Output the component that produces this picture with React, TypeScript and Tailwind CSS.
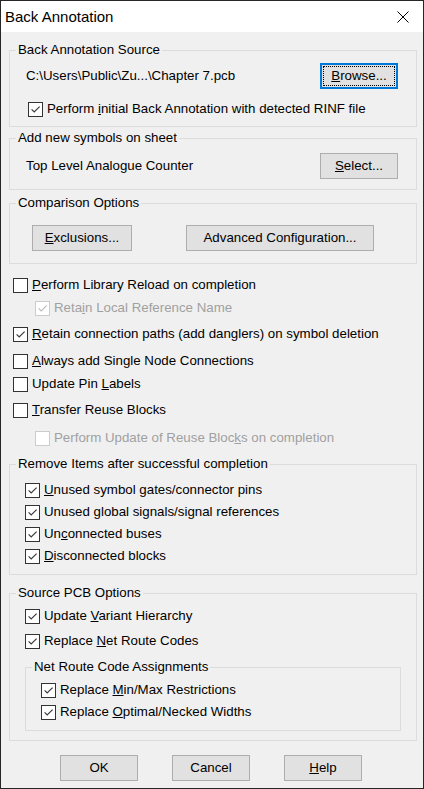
import type { ReactNode } from "react";
import clsx from "clsx";

function Box({ checked, disabled }: { checked?: boolean; disabled?: boolean }) {
    return (
        <span className={clsx("flex h-[15px] w-[15px] shrink-0 items-center justify-center border bg-white", disabled ? "border-[#cccccc]" : "border-[#333333]")}>
            {checked && (
                <svg width="13" height="13" viewBox="0 0 13 13">
                    <path d="M2.6 6.4 L5.2 9 L10.6 3.6" fill="none" stroke={disabled ? "#bdbdbd" : "#3c3c3c"} strokeWidth="1.2" />
                </svg>
            )}
        </span>
    )
}

function Option({ checked, disabled, className, children }: { checked?: boolean; disabled?: boolean; className?: string; children: ReactNode }) {
    return (
        <div className={clsx("flex h-4 items-center", className)}>
            <Box checked={checked} disabled={disabled} />
            <span className={clsx("ml-[4px] whitespace-nowrap", disabled && "text-[#a0a0a0]")}>{children}</span>
        </div>
    )
}

function Group({ title, className, children }: { title: string; className?: string; children: ReactNode }) {
    return (
        <fieldset className={clsx("border border-[#dcdcdc]", className)}>
            <legend className="ml-[6px] px-[2px] leading-4">{title}</legend>
            {children}
        </fieldset>
    )
}

function Button({ className, children }: { className?: string; children: ReactNode }) {
    return (
        <button className={clsx("flex h-[26px] items-center justify-center border border-[#adadad] bg-[#e1e1e1]", className)}>
            {children}
        </button>
    )
}

export default function App() {
    return (
        <div className="flex h-[789px] w-[424px] flex-col border border-[#262626] bg-[#f0f0f0] font-['Liberation_Sans',Arial,sans-serif] text-[13.3px] leading-4 text-black">
            <div className="flex h-[31px] shrink-0 items-center justify-between bg-white pl-[4px] pr-[14px]">
                <span className="text-[15px]">Back Annotation</span>
                <svg width="12" height="12" viewBox="0 0 12 12">
                    <path d="M0.5 0.5 L11.5 11.5 M11.5 0.5 L0.5 11.5" stroke="#000" strokeWidth="1" />
                </svg>
            </div>

            <div className="flex flex-1 flex-col">
                <Group title="Back Annotation Source" className="ml-[8px] mt-[10px] w-[408px] pb-[9px]">
                    <div className="mt-[5px] flex h-[26px] items-center justify-between pl-[16px] pr-[18px]">
                        <span>C:\Users\Public\Zu...\Chapter 7.pcb</span>
                        <button className="h-[26px] w-[78px] border-2 border-[#0078d7] bg-[#e1e1e1] p-[1px]">
                            <span className="flex h-full w-full items-center justify-center border border-dotted border-black">
                                <span><u>B</u>rowse...</span>
                            </span>
                        </button>
                    </div>
                    <Option checked className="ml-[18px] mt-[12px]">Perform <u>i</u>nitial Back Annotation with detected RINF file</Option>
                </Group>

                <Group title="Add new symbols on sheet" className="ml-[8px] mt-[3px] w-[408px] pb-[10px]">
                    <div className="mt-[7px] flex h-[26px] items-center justify-between pl-[16px] pr-[18px]">
                        <span>Top Level Analogue Counter</span>
                        <Button className="w-[78px]"><span><u>S</u>elect...</span></Button>
                    </div>
                </Group>

                <Group title="Comparison Options" className="ml-[8px] mt-[5px] w-[408px] pb-[12px]">
                    <div className="mt-[14px] flex">
                        <Button className="ml-[22px] w-[100px]"><span><u>E</u>xclusions...</span></Button>
                        <Button className="ml-[54px] w-[188px]"><span>Advanced Confi<u>g</u>uration...</span></Button>
                    </div>
                </Group>

                <div className="ml-[12px] mt-[13px]">
                    <Option><u>P</u>erform Library Reload on completion</Option>
                    <Option checked disabled className="ml-[22px] mt-[7px]">Reta<u>i</u>n Local Reference Name</Option>
                    <Option checked className="mt-[10px]"><u>R</u>etain connection paths (add danglers) on symbol deletion</Option>
                    <Option className="mt-[11px]"><u>A</u>lways add Single Node Connections</Option>
                    <Option className="mt-[7px]">Update Pin <u>L</u>abels</Option>
                    <Option className="mt-[10px]"><u>T</u>ransfer Reuse Blocks</Option>
                    <Option disabled className="ml-[22px] mt-[12px]">Perform Update of Reuse Bloc<u>k</u>s on completion</Option>
                </div>

                <Group title="Remove Items after successful completion" className="ml-[8px] mt-[10px] w-[408px] pb-[10px]">
                    <Option checked className="ml-[15px] mt-[10px]"><u>U</u>nused symbol gates/connector pins</Option>
                    <Option checked className="ml-[15px] mt-[6px]">Unused <u>g</u>lobal signals/signal references</Option>
                    <Option checked className="ml-[15px] mt-[6px]">Un<u>c</u>onnected buses</Option>
                    <Option checked className="ml-[15px] mt-[6px]"><u>D</u>isconnected blocks</Option>
                </Group>

                <Group title="Source PCB Options" className="ml-[8px] mt-[10px] w-[408px] pb-[9px]">
                    <Option checked className="ml-[15px] mt-[7px]">Update <u>V</u>ariant Hierarchy</Option>
                    <Option checked className="ml-[15px] mt-[9px]">Replace <u>N</u>et Route Codes</Option>
                    <Group title="Net Route Code Assignments" className="ml-[15px] mt-[10px] w-[376px] pb-[10px]">
                        <Option checked className="ml-[15px] mt-[7px]">Replace <u>M</u>in/Max Restrictions</Option>
                        <Option checked className="ml-[15px] mt-[6px]">Replace <u>O</u>ptimal/Necked Widths</Option>
                    </Group>
                </Group>

                <div className="ml-[59px] mt-[14px] flex gap-[34px]">
                    <Button className="w-[78px]">OK</Button>
                    <Button className="w-[78px]">Cancel</Button>
                    <Button className="w-[78px]"><span><u>H</u>elp</span></Button>
                </div>
            </div>
        </div>
    )
}
